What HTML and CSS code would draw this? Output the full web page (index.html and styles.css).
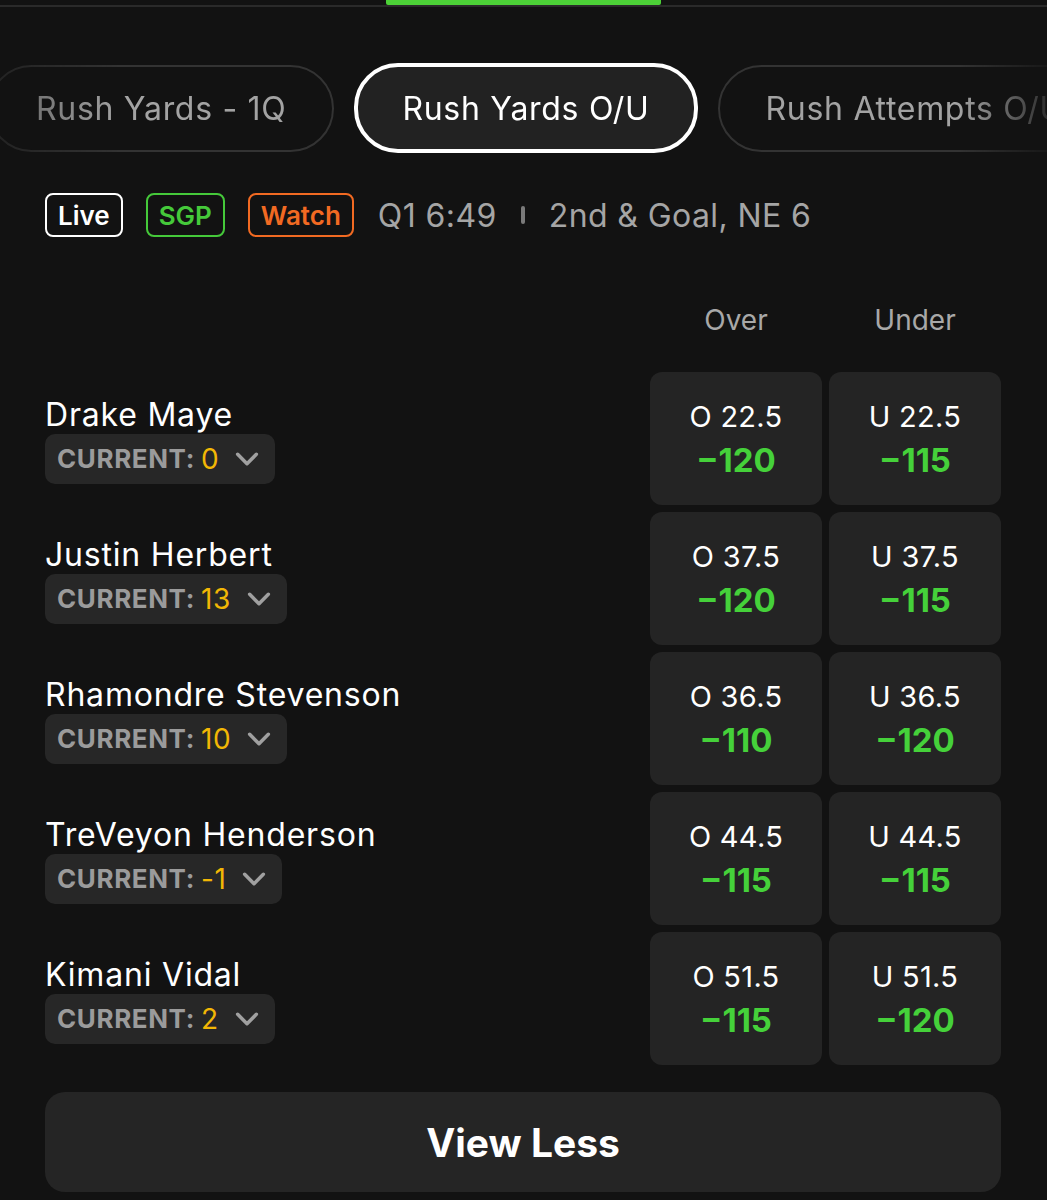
FILE: index.html
```html
<!DOCTYPE html>
<html>
<head>
<meta charset="utf-8">
<link rel="stylesheet" href="styles.css">
</head>
<body>
<div class="page">
  <div class="topstrip"><div class="indicator"></div></div>

  <div class="tabs-wrap">
    <div class="tabs">
      <div class="tab">Rush Yards - 1Q</div>
      <div class="tab active">Rush Yards O/U</div>
      <div class="tab">Rush Attempts O/U</div>
    </div>
  </div>

  <div class="status">
    <span class="badge live">Live</span>
    <span class="badge sgp">SGP</span>
    <span class="badge watch">Watch</span>
    <span class="clock">Q1 6:49</span>
    <span class="sep"></span>
    <span class="down">2nd &amp; Goal, NE 6</span>
  </div>

  <div class="market">
    <div class="head-spacer"></div>
    <div class="col-head">Over</div>
    <div class="col-head">Under</div>

    <div class="player">
      <div class="name">Drake Maye</div>
      <div class="chip"><span class="lbl">CURRENT:</span><span class="val">0</span><svg class="chev" viewBox="0 0 24 24"><path d="M4 8l8 8 8-8"/></svg></div>
    </div>
    <div class="odd"><div class="line">O 22.5</div><div class="price">−120</div></div>
    <div class="odd"><div class="line">U 22.5</div><div class="price">−115</div></div>

    <div class="player">
      <div class="name">Justin Herbert</div>
      <div class="chip"><span class="lbl">CURRENT:</span><span class="val">13</span><svg class="chev" viewBox="0 0 24 24"><path d="M4 8l8 8 8-8"/></svg></div>
    </div>
    <div class="odd"><div class="line">O 37.5</div><div class="price">−120</div></div>
    <div class="odd"><div class="line">U 37.5</div><div class="price">−115</div></div>

    <div class="player">
      <div class="name">Rhamondre Stevenson</div>
      <div class="chip"><span class="lbl">CURRENT:</span><span class="val">10</span><svg class="chev" viewBox="0 0 24 24"><path d="M4 8l8 8 8-8"/></svg></div>
    </div>
    <div class="odd"><div class="line">O 36.5</div><div class="price">−110</div></div>
    <div class="odd"><div class="line">U 36.5</div><div class="price">−120</div></div>

    <div class="player">
      <div class="name">TreVeyon Henderson</div>
      <div class="chip"><span class="lbl">CURRENT:</span><span class="val">-1</span><svg class="chev" viewBox="0 0 24 24"><path d="M4 8l8 8 8-8"/></svg></div>
    </div>
    <div class="odd"><div class="line">O 44.5</div><div class="price">−115</div></div>
    <div class="odd"><div class="line">U 44.5</div><div class="price">−115</div></div>

    <div class="player">
      <div class="name">Kimani Vidal</div>
      <div class="chip"><span class="lbl">CURRENT:</span><span class="val">2</span><svg class="chev" viewBox="0 0 24 24"><path d="M4 8l8 8 8-8"/></svg></div>
    </div>
    <div class="odd"><div class="line">O 51.5</div><div class="price">−115</div></div>
    <div class="odd"><div class="line">U 51.5</div><div class="price">−120</div></div>
  </div>

  <div class="viewless">View Less</div>
</div>
</body>
</html>
```

FILE: styles.css
```css
html, body {
  margin: 0;
  padding: 0;
  background: #121212;
}
body {
  font-family: Inter, "Noto Sans", sans-serif;
  color: #ffffff;
  width: 1047px;
  height: 1200px;
  overflow: hidden;
}
.page {
  display: flex;
  flex-direction: column;
}
.topstrip {
  height: 5px;
  border-bottom: 2px solid #2a2a2a;
}
.indicator {
  margin-left: 386px;
  width: 275px;
  height: 5px;
  background: #4cd137;
  border-radius: 0 0 2px 2px;
}
.tabs-wrap {
  margin-top: 56px;
  overflow: hidden;
  -webkit-mask-image: linear-gradient(to right, rgba(0,0,0,0.55) 0px, #000 120px, #000 960px, rgba(0,0,0,0.2) 1047px);
  mask-image: linear-gradient(to right, rgba(0,0,0,0.55) 0px, #000 120px, #000 960px, rgba(0,0,0,0.2) 1047px);
}
.tabs {
  display: flex;
  gap: 20px;
  margin-left: -12px;
  padding: 2px 0;
  white-space: nowrap;
}
.tab {
  flex: none;
  height: 87px;
  box-sizing: border-box;
  padding: 0 46px;
  border: 2px solid #333333;
  border-radius: 44px;
  display: flex;
  align-items: center;
  font-size: 32px;
  letter-spacing: 0.7px;
  color: #a3a3a3;
}
.tab.active {
  border: 4px solid #ffffff;
  background: #222222;
  color: #ffffff;
  height: 90px;
  margin-top: -2px;
  padding: 0 44px;
}
.status {
  margin-top: 37px;
  padding-left: 45px;
  display: flex;
  align-items: center;
  height: 46px;
}
.badge {
  box-sizing: border-box;
  height: 44px;
  border: 2px solid;
  border-radius: 8px;
  padding: 0 11px;
  display: flex;
  align-items: center;
  font-size: 26px;
  font-weight: 600;
  margin-right: 23px;
}
.badge.live { color: #ffffff; border-color: #ffffff; }
.badge.sgp { color: #45c93a; border-color: #45c93a; }
.badge.watch { color: #f26a22; border-color: #f26a22; margin-right: 24px; }
.clock, .down {
  font-size: 32px;
  letter-spacing: 0.4px;
  color: #a5a5a5;
}
.sep {
  width: 4px;
  height: 18px;
  background: #7a7a7a;
  border-radius: 2px;
  margin: 0 24px;
}
.market {
  margin-top: 65px;
  padding: 0 46px 0 45px;
  display: grid;
  grid-template-columns: 1fr 172px 172px;
  column-gap: 7px;
  row-gap: 7px;
}
.col-head {
  text-align: center;
  font-size: 28px;
  color: #a8a8a8;
  height: 40px;
  margin-bottom: 22px;
}
.player {
  display: flex;
  flex-direction: column;
  justify-content: center;
  align-items: flex-start;
  padding-top: 4px;
}
.name {
  font-size: 32px;
  line-height: 38px;
  letter-spacing: 0.8px;
  color: #ffffff;
  margin-top: -2px;
}
.chip {
  height: 50px;
  box-sizing: border-box;
  padding: 0 14px 0 12px;
  background: #272727;
  border-radius: 10px;
  display: flex;
  align-items: center;
}
.lbl {
  font-size: 26px;
  font-weight: 700;
  color: #9b9b9b;
  letter-spacing: 0.6px;
}
.val {
  font-size: 28px;
  color: #f2b705;
  margin-left: 6px;
  letter-spacing: 0.5px;
}
.chev {
  width: 28px;
  height: 28px;
  margin-left: 14px;
  fill: none;
  stroke: #a0a0a0;
  stroke-width: 3;
  stroke-linecap: round;
  stroke-linejoin: round;
}
.odd {
  height: 133px;
  background: #242424;
  border-radius: 12px;
  display: flex;
  flex-direction: column;
  align-items: center;
  justify-content: center;
}
.line {
  font-size: 29px;
  line-height: 42px;
  letter-spacing: 0.3px;
  color: #ffffff;
}
.price {
  font-size: 33px;
  line-height: 44px;
  font-weight: 700;
  color: #45d13a;
}
.viewless {
  margin: 27px 46px 0 45px;
  height: 100px;
  background: #252525;
  border-radius: 20px;
  display: flex;
  align-items: center;
  justify-content: center;
  font-size: 39px;
  font-weight: 700;
  letter-spacing: 0px;
}
```
